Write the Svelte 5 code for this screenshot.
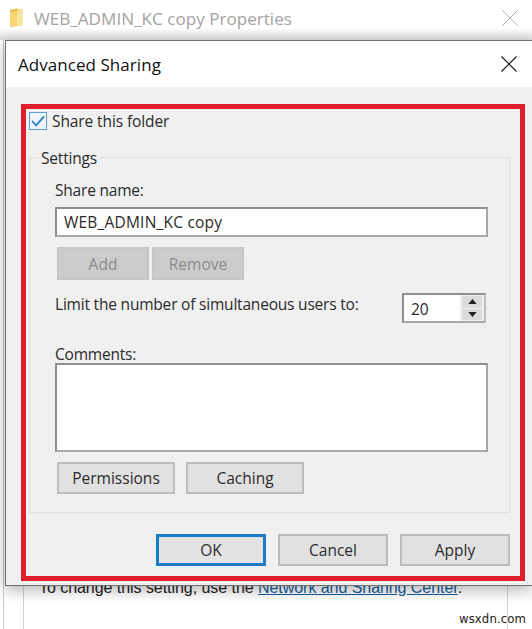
<script>
  const dialogTitle = 'Advanced Sharing';
</script>

<div class="page">
  <header class="parent-bar">
    <svg class="folder" width="14" height="20" viewBox="0 0 14 20" aria-hidden="true">
      <path d="M1 2 L8 0.5 L13.5 1.5 V17.5 L8 18 L2 19.5 L1 18 Z" fill="#f6d676" />
      <path d="M1 2 L8 0.5 V3 L1 4.5 Z" fill="#e9bf55" />
      <path d="M8 3 L13.5 2 V17.5 L8 18 Z" fill="#fae49a" />
    </svg>
    <span class="parent-title">WEB_ADMIN_KC copy Properties</span>
    <svg class="x" width="16" height="16" viewBox="0 0 16 16" aria-hidden="true">
      <path d="M0.5 0.5 L15.5 15.5 M15.5 0.5 L0.5 15.5" stroke="#aaa" stroke-width="1" fill="none" />
    </svg>
  </header>

  <div class="parent-body">
    <p class="note">To change this setting, use the <a href="#net">Network and Sharing Center</a>.</p>
  </div>
  <span class="mark">wsxdn.com</span>

  <section class="dialog">
    <div class="dlg-head">
      <h1>{dialogTitle}</h1>
      <svg class="x" width="16" height="16" viewBox="0 0 16 16" aria-hidden="true">
        <path d="M0.5 0.5 L15.5 15.5 M15.5 0.5 L0.5 15.5" stroke="#111" stroke-width="1.1" fill="none" />
      </svg>
    </div>
    <div class="dlg-body">
      <div class="red">
        <label class="check">
          <span class="box">
            <svg width="18" height="18" viewBox="0 0 18 18" aria-hidden="true">
              <path d="M3 9 L7.2 13.4 L15 4.4" stroke="#2f7fc4" stroke-width="1.8" fill="none" />
            </svg>
          </span>
          <span>Share this folder</span>
        </label>

        <div class="group">
          <span class="legend">Settings</span>
          <div class="label name-label">Share name:</div>
          <div class="input name">WEB_ADMIN_KC copy</div>
          <div class="row add-row">
            <button class="btn disabled add">Add</button>
            <button class="btn disabled add">Remove</button>
          </div>
          <div class="limit">
            <span class="label">Limit the number of simultaneous users to:</span>
            <div class="spin">
              <span class="spin-val">20</span>
              <div class="arrows">
                <span class="arrow"><svg width="9" height="5" viewBox="0 0 10 6" aria-hidden="true"><path d="M5 0 L10 6 H0 Z" fill="#222" /></svg></span>
                <span class="arrow"><svg width="9" height="5" viewBox="0 0 10 6" aria-hidden="true"><path d="M0 0 H10 L5 6 Z" fill="#222" /></svg></span>
              </div>
            </div>
          </div>
          <div class="label comments-label">Comments:</div>
          <div class="input comments"></div>
          <div class="row perm-row">
            <button class="btn perm">Permissions</button>
            <button class="btn perm">Caching</button>
          </div>
        </div>

        <div class="actions">
          <button class="btn act ok">OK</button>
          <button class="btn act">Cancel</button>
          <button class="btn act">Apply</button>
        </div>
      </div>
    </div>
  </section>
</div>

<style>
  :global(body) {
    margin: 0;
    background: #fff;
  }
  .page {
    position: relative;
    width: 532px;
    height: 629px;
    overflow: hidden;
    background: #fff;
    font-family: "Open Sans", "Noto Sans", sans-serif;
    color: #2b2b2b;
  }
  .parent-bar {
    height: 40px;
    box-sizing: border-box;
    display: flex;
    align-items: center;
    padding: 0 14px 4px 9px;
    background: linear-gradient(#fff 0, #fff 28px, #dcdcdc 40px);
  }
  .folder {
    flex: none;
  }
  .parent-title {
    margin-left: 11px;
    font-size: 17.1px;
    color: #a3a3a3;
    flex: 1;
  }
  .parent-body {
    position: absolute;
    left: 3px;
    right: 0;
    top: 40px;
    bottom: 0;
    border-left: 1px solid #c9c9c9;
    box-shadow: inset 20px 0 0 #fff;
  }
  .parent-body::before {
    content: "";
    position: absolute;
    left: 19px;
    top: 0;
    bottom: 0;
    width: 1px;
    background: #d4d4d4;
  }
  .parent-body::after {
    content: "";
    position: absolute;
    right: 24px;
    top: 0;
    bottom: 0;
    width: 1px;
    background: #d4d4d4;
  }
  .note {
    position: absolute;
    left: 35px;
    top: 538px;
    margin: 0;
    white-space: nowrap;
    font-family: "Liberation Sans", Arial, sans-serif;
    font-size: 16px;
    letter-spacing: -0.05px;
    line-height: 20px;
    color: #222;
  }
  .note a {
    color: #1a5f9c;
    text-decoration: underline;
  }
  .mark {
    position: absolute;
    left: 459px;
    top: 610px;
    font-family: "DejaVu Sans", sans-serif;
    font-size: 11.7px;
    line-height: 18px;
    letter-spacing: 0.1px;
    color: #222;
  }
  .dialog {
    position: absolute;
    left: 5px;
    top: 40px;
    width: 527px;
    height: 546px;
    box-sizing: border-box;
    border: 1px solid #6f6f6f;
    border-right: 0;
    background: #f0f0f0;
    box-shadow: 0 4px 14px rgba(0, 0, 0, 0.3);
    display: flex;
    flex-direction: column;
  }
  .dlg-head {
    height: 46px;
    flex: none;
    background: #fff;
    display: flex;
    align-items: center;
    justify-content: space-between;
    padding: 0 15px 0 12px;
  }
  h1 {
    margin: 0;
    font-size: 17px;
    font-weight: 400;
    letter-spacing: 0.05px;
    color: #111;
  }
  .dlg-body {
    flex: 1;
    padding: 17px 6px 0 15px;
  }
  .red {
    width: 504px;
    height: 477px;
    box-sizing: border-box;
    border: 5px solid #dd1f2b;
    display: flex;
    flex-direction: column;
  }
  .check {
    display: flex;
    align-items: center;
    gap: 5px;
    height: 22px;
    margin: 1px 0 0 3px;
    font-size: 15.5px;
    letter-spacing: -0.1px;
  }
  .box {
    width: 18px;
    height: 18px;
    box-sizing: border-box;
    border: 1px solid #5c9fd6;
    background: #eef4fa;
    display: flex;
    align-items: center;
    justify-content: center;
  }
  .box svg {
    flex: none;
  }
  .group {
    position: relative;
    margin: 25px 0 0 3px;
    width: 481px;
    height: 356px;
    box-sizing: border-box;
    border: 1px solid #dfdfdf;
    padding: 0 21px 0 24px;
    font-size: 15.5px;
    letter-spacing: -0.2px;
  }
  .legend {
    position: absolute;
    left: 8px;
    top: -11px;
    padding: 0 3px;
    background: #f0f0f0;
    line-height: 22px;
  }
  .label {
    line-height: 22px;
  }
  .name-label {
    margin-top: 21px;
    padding-left: 1px;
  }
  .input {
    box-sizing: border-box;
    width: 433px;
    margin-left: 1px;
    background: #fff;
    border: 2px solid #8f8f8f;
    border-right-color: #a8a8a8;
    border-bottom-color: #a8a8a8;
  }
  .name {
    height: 30px;
    margin-top: 6px;
    padding-left: 7px;
    line-height: 26px;
    letter-spacing: 0.2px;
  }
  .row {
    display: flex;
    margin-left: 3px;
  }
  .add-row {
    gap: 3px;
    margin-top: 10px;
  }
  .btn {
    box-sizing: border-box;
    font: inherit;
    color: #2b2b2b;
    background: #e1e1e1;
    border: 2px solid #bcbcbc;
    padding: 0;
    border-radius: 0;
  }
  .add {
    width: 92px;
    height: 33px;
  }
  .disabled {
    background: #ccc;
    border-color: #c6c6c6;
    color: #8b8b8b;
  }
  .limit {
    display: flex;
    align-items: center;
    justify-content: space-between;
    margin-top: 13px;
    width: 432px;
    height: 30px;
  }
  .limit .label {
    position: relative;
    bottom: 4px;
    padding-left: 1px;
  }
  .spin {
    width: 84px;
    height: 30px;
    box-sizing: border-box;
    display: flex;
    border: 2px solid #8f8f8f;
    border-right-color: #bdbdbd;
    border-bottom-color: #a8a8a8;
    background: #fff;
  }
  .spin-val {
    flex: 1;
    padding-left: 7px;
    line-height: 28px;
  }
  .arrows {
    width: 24px;
    display: flex;
    flex-direction: column;
    gap: 1px;
    background: #f0f0f0;
    padding: 1px 2px 1px 2px;
    box-sizing: border-box;
  }
  .arrow {
    flex: 1;
    display: flex;
    align-items: center;
    justify-content: center;
    background: #dcdcdc;
  }
  .comments-label {
    margin-top: 21px;
    padding-left: 1px;
    line-height: 20px;
  }
  .comments {
    height: 89px;
    margin-top: -1px;
  }
  .perm-row {
    gap: 11px;
    margin-top: 10px;
  }
  .perm {
    width: 118px;
    height: 32px;
  }
  .actions {
    display: flex;
    gap: 12px;
    padding-left: 130px;
    margin-top: 21px;
    font-size: 15.5px;
  }
  .act {
    width: 110px;
    height: 32px;
  }
  .ok {
    border: 3px solid #1a7cc7;
    background: #e3e3e3;
  }
</style>
